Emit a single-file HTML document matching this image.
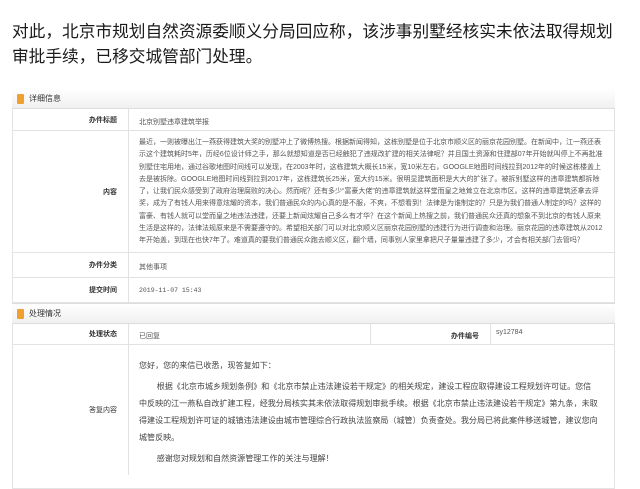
<!DOCTYPE html>
<html><head><meta charset="utf-8"><style>
*{margin:0;padding:0;box-sizing:border-box}
body{width:640px;height:466px;overflow:hidden;background:#fff;font-family:"Liberation Sans","Noto Sans CJK SC",sans-serif;color:#222;position:relative}
.h{position:absolute;left:12px;top:19px;font-size:16.7px;line-height:25px;width:625px;color:#1a1a1a;white-space:nowrap}
.box{position:absolute;left:12px;top:89px;width:603px;height:400px;border:1px solid #e4e4e4;border-radius:6px 6px 0 0;background:#fff}
.bar{position:absolute;left:12px;width:603px;height:20px;background:linear-gradient(#fff,#f0f0f0);border-bottom:1px solid #ddd;font-size:8px;line-height:20px;padding-left:17px;color:#333}
.bar i{position:absolute;left:5px;top:5px;width:7px;height:10px;background:#f0a030;border-radius:1px}
.row{position:absolute;left:12px;width:603px;border-bottom:1px solid #e2e2e2;border-right:1px solid #e2e2e2}
.lab{position:absolute;left:0;top:0;bottom:0;width:117px;border-right:1px solid #e2e2e2;font-size:7px;font-weight:bold;text-align:right;padding-right:11px;display:flex;align-items:center;justify-content:flex-end;color:#333}
.val{position:absolute;left:127px;font-size:7px;color:#555}
.ct{position:absolute;left:139px;top:137px;width:466px;font-size:7px;line-height:12.3px;color:#555}
.rp{position:absolute;left:139px;top:357px;width:470px;font-size:8.05px;line-height:17px;color:#444;white-space:nowrap}
.rp p{text-indent:2.2em}
</style></head><body>
<div class="h">对此，北京市规划自然资源委顺义分局回应称，该涉事别墅经核实未依法取得规划<br>审批手续，已移交城管部门处理。</div>
<div class="box"></div>
<div class="bar" style="top:89px"><i></i>详细信息</div>
<div class="row" style="top:109px;height:22px"><div class="lab">办件标题</div><div class="val" style="top:8px">北京别墅违章建筑举报</div></div>
<div class="row" style="top:131px;height:122px"><div class="lab">内容</div></div>
<div class="ct">最近，一则被曝出江一燕获得建筑大奖的别墅冲上了微博热搜。根据新闻得知，这栋别墅是位于北京市顺义区的丽京花园别墅。在新闻中，江一燕还表示这个建筑耗时5年，历经6位设计师之手，那么就想知道是否已经触犯了违规改扩建的相关法律呢？并且国土资源和住建部07年开始就叫停上不再批准别墅住宅用地，通过谷歌地图时间线可以发现，在2003年时，这栋建筑大概长15米，宽10米左右，GOOGLE地图时间线拉到2012年的时候这栋楼盖上去是被拆除。GOOGLE地图时间线到拉到2017年，这栋建筑长25米，宽大约15米。很明显建筑面积是大大的扩张了。被拆别墅这样的违章建筑都拆除了，让我们民众感受到了政府治理腐败的决心。然而呢？还有多少“富豪大佬”的违章建筑就这样堂而皇之地耸立在北京市区。这样的违章建筑还拿去评奖，成为了有钱人用来得意炫耀的资本，我们普通民众的内心真的是不服，不爽，不想看到！法律是为谁制定的？只是为我们普通人制定的吗？这样的富豪、有钱人就可以堂而皇之地违法违建，还要上新闻炫耀自己多么有才华？在这个新闻上热搜之前，我们普通民众还真的想象不到北京的有钱人原来生活是这样的，法律法规原来是不需要遵守的。希望相关部门可以对北京顺义区丽京花园别墅的违建行为进行调查和治理。丽京花园的违章建筑从2012年开始盖，到现在也快7年了。难道真的要我们普通民众跑去顺义区，翻个墙，同事别人家里拿把尺子量量违建了多少，才会有相关部门去管吗？</div>
<div class="row" style="top:253px;height:25px"><div class="lab">办件分类</div><div class="val" style="top:9px">其他事项</div></div>
<div class="row" style="top:278px;height:25px"><div class="lab">提交时间</div><div class="val" style="top:9px;font-family:'Liberation Mono',monospace;font-size:6.5px">2019-11-07 15:43</div></div>
<div class="bar" style="top:303px;height:21px;border-top:1px solid #ddd"><i></i>处理情况</div>
<div class="row" style="top:324px;height:21px"><div class="lab">处理状态</div><div class="val" style="top:7px">已回复</div>
<div style="position:absolute;left:358px;top:0;bottom:0;width:121px;border-left:1px solid #e2e2e2;border-right:1px solid #e2e2e2;font-size:7px;font-weight:bold;text-align:right;padding:7px 11px 0 0;color:#333">办件编号</div>
<div class="val" style="left:484px;top:5px">sy12784</div></div>
<div class="row" style="top:345px;height:130px;border-bottom:none"><div class="lab" style="font-weight:normal">答复内容</div></div>
<div class="rp"><div style="margin-bottom:4px">您好，您的来信已收悉，现答复如下：</div><p>根据《北京市城乡规划条例》和《北京市禁止违法建设若干规定》的相关规定，建设工程应取得建设工程规划许可证。您信<br>中反映的江一燕私自改扩建工程，经我分局核实其未依法取得规划审批手续。根据《北京市禁止违法建设若干规定》第九条，未取<br>得建设工程规划许可证的城镇违法建设由城市管理综合行政执法监察局（城管）负责查处。我分局已将此案件移送城管，建议您向<br>城管反映。</p><p style="margin-top:4px">感谢您对规划和自然资源管理工作的关注与理解！</p></div>
</body></html>
